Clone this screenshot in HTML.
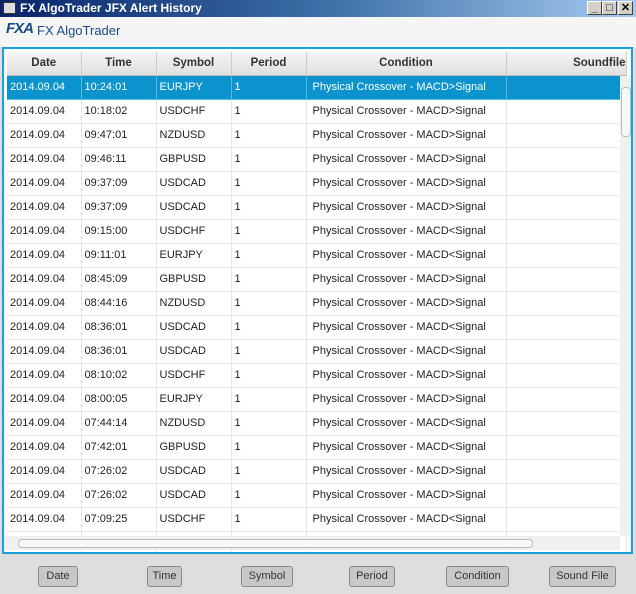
<!DOCTYPE html>
<html><head><style>
*{margin:0;padding:0;box-sizing:border-box}
body{width:636px;height:594px;overflow:hidden;background:#dedede;font-family:"Liberation Sans",Tahoma,sans-serif;font-size:11px;color:#222;position:relative}
.title{position:absolute;left:0;top:0;width:636px;height:17px;background:linear-gradient(90deg,#0a246a,#3a6ea5 50%,#a6caf0);color:#fff;font-weight:bold;font-size:12px;line-height:17px;padding-left:20px}
.ticon{position:absolute;left:3px;top:2px;width:13px;height:12px;background:#ddd;border:1px solid #333}
.tb{position:absolute;top:1px;width:15px;height:14px;background:#d4d0c8;border:1px solid;border-color:#fff #404040 #404040 #fff;color:#000;font-size:11px;line-height:12px;text-align:center;font-weight:bold}
.hdr{position:absolute;left:0;top:17px;width:636px;height:30px;background:#f5f5f5}
.logo{position:absolute;left:6px;top:20px;font-style:italic;font-weight:bold;font-size:15px;color:#1a4a8a;letter-spacing:-1px}
.logot{position:absolute;left:37px;top:23px;font-size:13px;color:#1a4a8a}
.box{position:absolute;left:2px;top:47px;width:631px;height:507px;border:2px solid #1aa0dc;background:#fff;overflow:hidden}
table{position:absolute;left:3px;top:3px;border-collapse:collapse;table-layout:fixed}
th{height:23px;background:linear-gradient(#f4f4f4,#e0e0e0);font-weight:bold;font-size:11.5px;border-right:1px solid #ccc;border-bottom:1px solid #bbb;color:#333}
td{height:24px;border-right:1px solid #e6e6e6;border-bottom:1px solid #e6e6e6;padding-left:3px;white-space:nowrap;overflow:hidden}
td:nth-child(5){padding-left:6px}
tr.sel td{background:#0a93cc;color:#fff;border-color:#5bb8e0}
.vs{position:absolute;left:616px;top:27px;width:13px;height:460px;background:#f0f0f0}
.vt{position:absolute;left:617px;top:38px;width:10px;height:50px;border:1px solid #bbb;border-radius:4px;background:#f8f8f8}
.hs{position:absolute;left:0;top:487px;width:616px;height:14px;background:#f0f0f0}
.ht{position:absolute;left:14px;top:490px;width:515px;height:9px;border:1px solid #bbb;border-radius:4px;background:#f8f8f8}
.btn{position:absolute;top:566px;height:21px;background:#c8c8c8;border:1px solid #888;border-radius:3px;font-size:11px;line-height:19px;text-align:center;color:#333}
</style></head><body>
<div class="title"><div class="ticon"></div>FX AlgoTrader JFX Alert History</div>
<div class="tb" style="left:587px">_</div><div class="tb" style="left:602px">□</div><div class="tb" style="left:618px">✕</div>
<div class="hdr"></div>
<div class="logo">FXA</div><div class="logot">FX AlgoTrader</div>
<div class="box">
<table>
<colgroup><col style="width:74px"><col style="width:75px"><col style="width:75px"><col style="width:75px"><col style="width:200px"><col style="width:120px"></colgroup>
<tr><th>Date</th><th>Time</th><th>Symbol</th><th>Period</th><th>Condition</th><th style="text-align:right">Soundfile</th></tr>
<tr class="sel"><td>2014.09.04</td><td>10:24:01</td><td>EURJPY</td><td>1</td><td>Physical Crossover - MACD&gt;Signal</td><td></td></tr>
<tr><td>2014.09.04</td><td>10:18:02</td><td>USDCHF</td><td>1</td><td>Physical Crossover - MACD&gt;Signal</td><td></td></tr>
<tr><td>2014.09.04</td><td>09:47:01</td><td>NZDUSD</td><td>1</td><td>Physical Crossover - MACD&gt;Signal</td><td></td></tr>
<tr><td>2014.09.04</td><td>09:46:11</td><td>GBPUSD</td><td>1</td><td>Physical Crossover - MACD&gt;Signal</td><td></td></tr>
<tr><td>2014.09.04</td><td>09:37:09</td><td>USDCAD</td><td>1</td><td>Physical Crossover - MACD&gt;Signal</td><td></td></tr>
<tr><td>2014.09.04</td><td>09:37:09</td><td>USDCAD</td><td>1</td><td>Physical Crossover - MACD&gt;Signal</td><td></td></tr>
<tr><td>2014.09.04</td><td>09:15:00</td><td>USDCHF</td><td>1</td><td>Physical Crossover - MACD&lt;Signal</td><td></td></tr>
<tr><td>2014.09.04</td><td>09:11:01</td><td>EURJPY</td><td>1</td><td>Physical Crossover - MACD&lt;Signal</td><td></td></tr>
<tr><td>2014.09.04</td><td>08:45:09</td><td>GBPUSD</td><td>1</td><td>Physical Crossover - MACD&gt;Signal</td><td></td></tr>
<tr><td>2014.09.04</td><td>08:44:16</td><td>NZDUSD</td><td>1</td><td>Physical Crossover - MACD&gt;Signal</td><td></td></tr>
<tr><td>2014.09.04</td><td>08:36:01</td><td>USDCAD</td><td>1</td><td>Physical Crossover - MACD&lt;Signal</td><td></td></tr>
<tr><td>2014.09.04</td><td>08:36:01</td><td>USDCAD</td><td>1</td><td>Physical Crossover - MACD&lt;Signal</td><td></td></tr>
<tr><td>2014.09.04</td><td>08:10:02</td><td>USDCHF</td><td>1</td><td>Physical Crossover - MACD&gt;Signal</td><td></td></tr>
<tr><td>2014.09.04</td><td>08:00:05</td><td>EURJPY</td><td>1</td><td>Physical Crossover - MACD&gt;Signal</td><td></td></tr>
<tr><td>2014.09.04</td><td>07:44:14</td><td>NZDUSD</td><td>1</td><td>Physical Crossover - MACD&lt;Signal</td><td></td></tr>
<tr><td>2014.09.04</td><td>07:42:01</td><td>GBPUSD</td><td>1</td><td>Physical Crossover - MACD&lt;Signal</td><td></td></tr>
<tr><td>2014.09.04</td><td>07:26:02</td><td>USDCAD</td><td>1</td><td>Physical Crossover - MACD&gt;Signal</td><td></td></tr>
<tr><td>2014.09.04</td><td>07:26:02</td><td>USDCAD</td><td>1</td><td>Physical Crossover - MACD&gt;Signal</td><td></td></tr>
<tr><td>2014.09.04</td><td>07:09:25</td><td>USDCHF</td><td>1</td><td>Physical Crossover - MACD&lt;Signal</td><td></td></tr>
<tr><td></td><td></td><td></td><td></td><td></td><td></td></tr>
</table>
<div class="vs"></div><div class="vt"></div>
<div class="hs"></div><div class="ht"></div>
</div>
<div class="btn" style="left:38px;width:40px">Date</div>
<div class="btn" style="left:147px;width:35px">Time</div>
<div class="btn" style="left:241px;width:52px">Symbol</div>
<div class="btn" style="left:349px;width:46px">Period</div>
<div class="btn" style="left:446px;width:63px">Condition</div>
<div class="btn" style="left:549px;width:67px">Sound File</div>
</body></html>
